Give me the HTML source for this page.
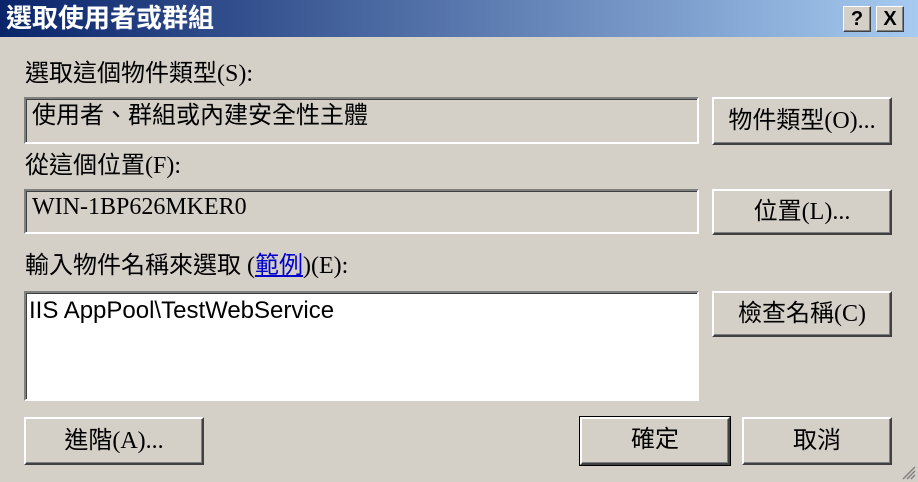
<!DOCTYPE html>
<html><head><meta charset="utf-8"><style>
body{margin:0;width:918px;height:482px;background:#d4d0c8;position:relative;overflow:hidden;font-family:"Liberation Serif","Noto Sans CJK TC",serif;font-size:24px;color:#000}
.t{position:absolute;left:0;top:0;width:918px;height:37px;background:linear-gradient(90deg,#0a246a,#a6caf0);color:#fff;font-weight:bold;font-size:26px;line-height:37px;text-indent:6px}
.tb{position:absolute;top:6px;width:26px;height:24px;background:#d4d0c8;border:1px solid;border-color:#fff #404040 #404040 #fff;box-shadow:inset -1px -1px #808080;color:#000;font-size:20px;font-weight:bold;text-align:center;line-height:24px;text-indent:0;font-family:"Liberation Sans",sans-serif}
.l{position:absolute;left:25px;white-space:nowrap;line-height:28px}
.f{position:absolute;box-sizing:border-box;border:2px solid;border-color:#808080 #fff #fff #808080;box-shadow:inset 1px 1px #404040;padding:3px 6px;white-space:nowrap;line-height:28px}
.b{position:absolute;box-sizing:border-box;border:2px solid;border-color:#fff #404040 #404040 #fff;box-shadow:inset -1px -1px #808080;text-align:center;white-space:nowrap}
</style></head><body>
<div class="t">選取使用者或群組<div class="tb" style="left:843px">?</div><div class="tb" style="left:876px">X</div></div>
<div class="l" style="top:60px">選取這個物件類型(S):</div>
<div class="f" style="left:24px;top:97px;width:675px;height:47px">使用者、群組或內建安全性主體</div>
<div class="b" style="left:712px;top:97px;width:180px;height:48px;line-height:44px">物件類型(O)...</div>
<div class="l" style="top:152px">從這個位置(F):</div>
<div class="f" style="left:24px;top:189px;width:675px;height:45px;padding-top:2px">WIN-1BP626MKER0</div>
<div class="b" style="left:712px;top:189px;width:180px;height:46px;line-height:42px">位置(L)...</div>
<div class="l" style="top:252px">輸入物件名稱來選取 (<span style="color:#00c;text-decoration:underline">範例</span>)(E):</div>
<div class="f" style="left:24px;top:291px;width:675px;height:110px;background:#fff;padding:4px 3px;font-family:'Liberation Sans','Noto Sans CJK TC',sans-serif">IIS AppPool\TestWebService</div>
<div class="b" style="left:712px;top:291px;width:180px;height:46px;line-height:42px">檢查名稱(C)</div>
<div class="b" style="left:24px;top:417px;width:180px;height:48px;line-height:44px">進階(A)...</div>
<div class="b" style="left:580px;top:417px;width:150px;height:48px;line-height:42px;outline:1px solid #000">確定</div>
<div class="b" style="left:742px;top:417px;width:150px;height:48px;line-height:44px">取消</div>
<svg style="position:absolute;right:2px;bottom:2px" width="16" height="16"><path d="M15 3L3 15M15 7L7 15M15 11L11 15" stroke="#808080" stroke-width="1.5"/></svg>
</body></html>
